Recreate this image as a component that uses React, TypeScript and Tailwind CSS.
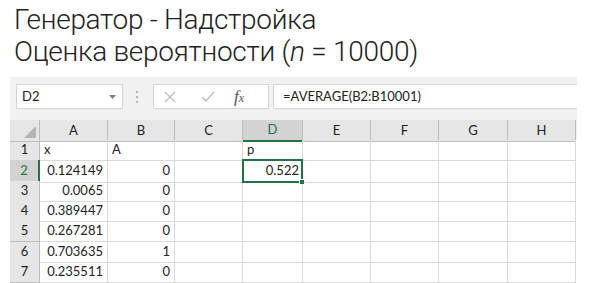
import React from "react";

const cols = ["A", "B", "C", "D", "E", "F", "G", "H"];
const rowHeights = ["h-[20px]", "h-[21px]", "h-[20px]", "h-[20px]", "h-[21px]", "h-[20px]", "h-[21px]"];

const data: { a: string; b: string; d?: string; left?: boolean }[] = [
  { a: "x", b: "A", d: "p", left: true },
  { a: "0.124149", b: "0", d: "0.522" },
  { a: "0.0065", b: "0" },
  { a: "0.389447", b: "0" },
  { a: "0.267281", b: "0" },
  { a: "0.703635", b: "1" },
  { a: "0.235511", b: "0" },
];

const gridCols = "grid grid-cols-[30px_68px_67px_68px_60px_68px_68px_69px_68px]";

export default function App() {
  return (
    <div className="w-[591px] h-[283px] overflow-hidden bg-white">
      <div
        className="pl-[14px] pt-[4px] text-[28px] leading-[32px] font-light tracking-[-0.3px] text-[#222]"
        style={{ fontFamily: 'Roboto, "Open Sans", sans-serif' }}
      >
        <div>Генератор - Надстройка</div>
        <div>
          Оценка вероятности (<i>n</i> = 10000)
        </div>
      </div>

      <div
        className="ml-[10px] mt-[9px] w-[567px] bg-[#f1f1f1] text-[#222]"
        style={{ fontFamily: '"Lato", "Open Sans", sans-serif' }}
      >
        {/* formula bar */}
        <div className="flex items-start h-[43px] pt-[7px]">
          <div className="ml-[6px] w-[107px] h-[25px] bg-white border border-[#d6d6d6] flex items-center justify-between pl-[5px] pr-[6px] text-[13px]">
            <span>D2</span>
            <svg width="7" height="4" viewBox="0 0 7 4">
              <path d="M0 0h7L3.5 4z" fill="#808080" />
            </svg>
          </div>
          <div className="ml-[13px] h-[25px] flex flex-col justify-center gap-[3px]">
            <span className="w-[2px] h-[2px] bg-[#b5b5b5]" />
            <span className="w-[2px] h-[2px] bg-[#b5b5b5]" />
            <span className="w-[2px] h-[2px] bg-[#b5b5b5]" />
          </div>
          <div className="ml-[15px] w-[116px] h-[25px] bg-white border border-[#d6d6d6] flex items-center">
            <svg className="ml-[10px]" width="12" height="12" viewBox="0 0 12 12">
              <path d="M1 1l10 10M11 1L1 11" stroke="#bdbdbd" strokeWidth="1.3" />
            </svg>
            <svg className="ml-[25px]" width="14" height="11" viewBox="0 0 14 11">
              <path d="M1 6l4 4L13 1" stroke="#bdbdbd" strokeWidth="1.4" fill="none" />
            </svg>
            <span
              className="ml-[19px] text-[17px] italic text-[#555]"
              style={{ fontFamily: '"Liberation Serif", serif' }}
            >
              f<span className="text-[12px]">x</span>
            </span>
          </div>
          <div className="ml-[4px] flex-1 h-[25px] bg-white border-y border-l border-[#d6d6d6] flex items-center pl-[9px] text-[13px]">
            =AVERAGE(B2:B10001)
          </div>
        </div>

        {/* column headers */}
        <div className={`${gridCols} h-[20px] text-[13px]`}>
          <div className="relative bg-[#e6e6e6] border-r border-b border-[#bdbdbd]">
            <svg className="absolute right-[3px] bottom-[3px]" width="12" height="12" viewBox="0 0 12 12">
              <path d="M12 0v12H0z" fill="#b4b4b4" />
            </svg>
          </div>
          {cols.map((c) => (
            <div
              key={c}
              className={
                c === "D"
                  ? "bg-[#d3d3d3] border-r border-b-2 border-r-[#bdbdbd] border-b-[#217346] text-[#217346] flex items-center justify-center"
                  : "bg-[#e6e6e6] border-r border-b border-[#bdbdbd] flex items-center justify-center"
              }
            >
              {c}
            </div>
          ))}
        </div>

        {/* rows */}
        {data.map((r, i) => {
          const n = i + 1;
          const sel = n === 2;
          return (
            <div key={n} className={`${gridCols} ${rowHeights[i]} text-[13px] bg-white`}>
              <div
                className={
                  sel
                    ? "bg-[#d3d3d3] border-r-2 border-b border-r-[#217346] border-b-[#bdbdbd] text-[#217346] flex items-center justify-center"
                    : "bg-[#e6e6e6] border-r border-b border-[#bdbdbd] flex items-center justify-center"
                }
              >
                {n}
              </div>
              <div
                className={`border-r border-b border-[#dadada] flex items-center px-[4px] ${
                  r.left ? "justify-start" : "justify-end"
                }`}
              >
                {r.a}
              </div>
              <div
                className={`border-r border-b border-[#dadada] flex items-center px-[4px] ${
                  r.left ? "justify-start" : "justify-end"
                }`}
              >
                {r.b}
              </div>
              <div className="border-r border-b border-[#dadada]" />
              {sel ? (
                <div className="relative -mt-[1px] -ml-[1px] border-2 border-[#217346] flex items-center justify-end pr-[2px]">
                  {r.d}
                  <span className="absolute -right-[4px] -bottom-[4px] w-[6px] h-[6px] bg-[#217346] border border-white" />
                </div>
              ) : (
                <div
                  className={`border-r border-b border-[#dadada] flex items-center px-[4px] ${
                    r.left ? "justify-start" : "justify-end"
                  }`}
                >
                  {r.d}
                </div>
              )}
              <div className="border-r border-b border-[#dadada]" />
              <div className="border-r border-b border-[#dadada]" />
              <div className="border-r border-b border-[#dadada]" />
              <div className="border-r border-b border-[#dadada]" />
            </div>
          );
        })}
      </div>
    </div>
  );
}
